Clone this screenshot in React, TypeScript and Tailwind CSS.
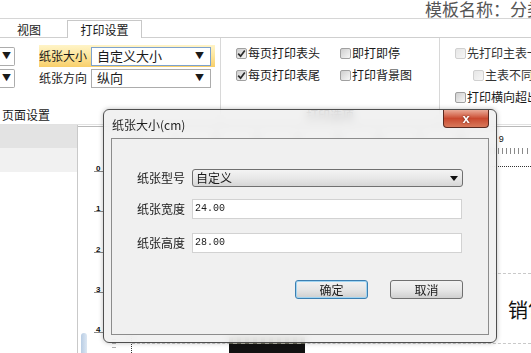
import { clsx } from 'clsx'

function Box({ checked, disabled }: { checked?: boolean; disabled?: boolean }) {
  return (
    <span
      className={clsx(
        'flex h-[11px] w-[11px] shrink-0 items-center justify-center rounded-[2px] border',
        disabled
          ? 'border-[#d0d0d0] bg-linear-to-br from-[#e6e6e6] to-[#f6f6f6]'
          : 'border-[#a0a0a0] bg-linear-to-br from-[#cfcfcf] to-[#f7f7f7]',
      )}
    >
      {checked && (
        <svg width="9" height="9" viewBox="0 0 9 9">
          <path d="M1.2 4.6 L3.6 7.2 L7.8 1.4" stroke="#2b2b2b" strokeWidth="1.7" fill="none" />
        </svg>
      )}
    </span>
  )
}

function Opt({ label, checked, disabled }: { label: string; checked?: boolean; disabled?: boolean }) {
  return (
    <div className="flex h-[22px] items-center gap-[1px] whitespace-nowrap">
      <Box checked={checked} disabled={disabled} />
      <span className={disabled ? 'text-[#333]' : 'text-[#1a1a1a]'}>{label}</span>
    </div>
  )
}

function RibbonSelect({ value, focused }: { value: string; focused?: boolean }) {
  return (
    <div
      className={clsx(
        'flex h-[19px] w-[120px] items-center justify-between border bg-white pl-[5px] pr-[6px] text-[13px]',
        focused ? 'border-[#7da2ce]' : 'border-[#acacac]',
      )}
    >
      <span>{value}</span>
      <span className="text-[9px]">▼</span>
    </div>
  )
}

const hTicks = [0, 1, 2, 3, 4, 5, 6, 7, 8, 9]
const vTicks = [0, 1, 2, 3, 4]

export default function App() {
  return (
    <div className="relative h-[353px] w-[531px] overflow-hidden bg-white font-['Noto_Sans_CJK_SC','Microsoft_YaHei',sans-serif] text-[12px] leading-[14px] text-[#1a1a1a]">
      {/* title strip */}
      <div className="h-[19px] overflow-hidden whitespace-nowrap border-b border-[#d6d6d6] pl-[425px] text-[17px] leading-[17px] text-[#555]">
        模板名称：分类销售单
      </div>

      {/* tabs */}
      <div className="flex h-[19px] items-end border-b border-[#cfcfcf]">
        <div className="w-[67px] self-center pl-[17px] pt-[3px]">视图</div>
        <div className="-mb-px flex h-[18px] w-[75px] items-center justify-center border border-b-0 border-[#c8c8c8] bg-white pt-[1px]">
          打印设置
        </div>
      </div>

      {/* ribbon */}
      <div className="flex h-[87px] border-b border-[#e2e2e2]">
        {/* page setup */}
        <div className="flex w-[221px] shrink-0 flex-col border-r border-[#d8d8d8] pt-[7px]">
          <div className="flex h-[22px] items-center">
            <div className="flex h-[19px] w-[15px] items-center rounded-r-[2px] border border-l-0 border-[#acacac] pl-[2px] text-[9px]">▼</div>
            <div className="ml-[24px] flex h-[22px] w-[176px] items-center bg-linear-to-b from-[#fff4c8] via-[#fde59a] to-[#f8cf6a]">
              <span className="w-[52px]">纸张大小</span>
              <RibbonSelect value="自定义大小" focused />
            </div>
          </div>
          <div className="flex h-[22px] items-center">
            <div className="flex h-[19px] w-[15px] items-center rounded-r-[2px] border border-l-0 border-[#acacac] pl-[2px] text-[9px]">▼</div>
            <span className="ml-[24px] w-[52px]">纸张方向</span>
            <RibbonSelect value="纵向" />
          </div>
          <div className="flex-1" />
          <div className="pb-[2px] pl-[2px]">页面设置</div>
        </div>

        {/* print options */}
        <div className="flex w-[219px] shrink-0 flex-col border-r border-[#d8d8d8] pt-[4px]">
          <div className="flex pl-[15px]">
            <div className="w-[104px]">
              <Opt label="每页打印表头" checked />
              <Opt label="每页打印表尾" checked />
            </div>
            <div>
              <Opt label="即打即停" />
              <Opt label="打印背景图" />
            </div>
          </div>
          <div className="flex-1" />
          <div className="pb-[2px] text-center">打印选项</div>
        </div>

        {/* master/detail */}
        <div className="flex min-w-0 flex-1 flex-col overflow-hidden pl-[15px] pt-[4px]">
          <Opt label="先打印主表一次" disabled />
          <div className="pl-[18px]">
            <Opt label="主表不同时分页" disabled />
          </div>
          <Opt label="打印横向超出部分" />
        </div>
      </div>

      {/* work area */}
      <div className="flex h-[228px]">
        <div className="flex w-[78px] shrink-0 flex-col border-r border-[#c9c9c9]">
          <div className="h-[23px] bg-[#e3e3e3]" />
          <div className="h-[24px] bg-[#f1f1f1]" />
        </div>

        <div className="flex min-w-0 flex-1 flex-col overflow-hidden">
          {/* horizontal ruler */}
          <div className="mt-[1px] flex h-[40px] shrink-0 border-t border-[#b9b9b9]">
            <div className="w-[53px] shrink-0" />
            {hTicks.map((n) => (
              <div key={n} className="flex w-[40.75px] shrink-0 flex-col">
                <span className="mt-[8px] pl-[1px] font-['Liberation_Sans',sans-serif] text-[9px] leading-[8px] text-[#111]">{n}</span>
                <div className="mt-[5px] h-[6px] bg-[repeating-linear-gradient(90deg,#8a8a8a_0,#8a8a8a_1px,transparent_1px,transparent_4.075px)]" />
              </div>
            ))}
          </div>

          <div className="flex min-h-0 flex-1">
            {/* vertical ruler */}
            <div className="flex w-[26px] shrink-0">
              <div className="ml-[3px] flex w-[6px] flex-col justify-end">
                <div className="h-[20px] rounded-t-[3px] bg-linear-to-r from-[#b9cde4] to-[#dce7f3]" />
              </div>
              <div className="ml-[7px] flex w-[9px] flex-col overflow-hidden">
                {vTicks.map((n) => (
                  <div key={n} className="h-[40.3px] shrink-0">
                    <div className="-mt-[1px] h-[7px] border-b border-[#8a8a8a] pl-[2px] font-['Liberation_Sans',sans-serif] text-[8px] font-bold leading-[7px] text-[#111]">
                      {n}
                    </div>
                  </div>
                ))}
              </div>
            </div>
            <div className="flex w-[27px] shrink-0 flex-col justify-end pb-[2px] pl-[8px]">
              <div className="mb-[3px] h-px w-[4px] bg-[#b0b0b0]" />
              <div className="mb-[3px] h-px w-[4px] bg-[#b0b0b0]" />
              <div className="mb-[3px] h-px w-[4px] bg-[#b0b0b0]" />
            </div>

            {/* report page */}
            <div className="relative flex min-w-0 flex-1 flex-col border-l border-t border-dotted border-l-[#333] border-t-[#333]">
              <div className="h-[107px] shrink-0 border-b border-dashed border-[#c9c9c9]" />
              <div className="h-[70px] shrink-0 whitespace-nowrap border-b border-dashed border-[#c9c9c9] pl-[376px] pt-[24px] text-[20px] leading-[24px] text-[#111]">
                销售单
              </div>
              <div className="absolute left-[97px] top-[170px] flex w-[76px] flex-col">
                <div className="h-[7px] bg-[repeating-linear-gradient(90deg,#6b6b5a_0,#6b6b5a_4px,#b5b5a8_4px,#b5b5a8_8px)]" />
                <div className="h-[9px] bg-[#111]" />
              </div>
            </div>
          </div>
        </div>
      </div>

      {/* dialog */}
      <div className="absolute left-[103px] top-[109px] flex h-[234px] w-[394px] flex-col rounded-[6px] border border-[#4e4e4e] bg-[rgba(238,238,238,0.8)] px-[7px] pb-[7px] shadow-[0_0_5px_rgba(0,0,0,0.25)] backdrop-blur-[4px]">
        <div className="flex h-[28px] shrink-0 items-start justify-between">
          <span className="pl-[1px] pt-[8px] text-[12px] leading-[14px] text-[#1e1e1e]">纸张大小(cm)</span>
          <div className="flex h-[18px] w-[46px] items-center justify-center rounded-b-[4px] border border-t-0 border-[#5a2a20] bg-linear-to-b from-[#e9a996] via-[#c9492f] to-[#d8785a] font-['Liberation_Sans',sans-serif] text-[13px] font-bold leading-[13px] text-white [text-shadow:0_0_2px_#5a1a10]">
            x
          </div>
        </div>
        <div className="flex flex-1 flex-col border border-[#8c8c8c] bg-[#f0f0f0] pl-[25px] pr-[25px] pt-[30px]">
          <div className="flex h-[18px] items-center">
            <span className="w-[55px] shrink-0">纸张型号</span>
            <div className="flex h-[18px] flex-1 items-center justify-between rounded-[3px] border border-[#707070] bg-linear-to-b from-[#f4f4f4] via-[#e8e8e8] to-[#d6d6d6] pl-[3px] pr-[4px]">
              <span>自定义</span>
              <svg width="8" height="5" viewBox="0 0 8 5">
                <path d="M0 0 H8 L4 5 Z" fill="#111" />
              </svg>
            </div>
          </div>
          <div className="mt-[12px] flex h-[20px] items-center">
            <span className="w-[55px] shrink-0">纸张宽度</span>
            <div className="mr-[1px] flex h-[20px] flex-1 items-center border border-[#d2d2d2] bg-white pl-[2px] font-['Liberation_Mono',monospace] text-[10px]">
              24.00
            </div>
          </div>
          <div className="mt-[14px] flex h-[20px] items-center">
            <span className="w-[55px] shrink-0">纸张高度</span>
            <div className="mr-[1px] flex h-[20px] flex-1 items-center border border-[#d2d2d2] bg-white pl-[2px] font-['Liberation_Mono',monospace] text-[10px]">
              28.00
            </div>
          </div>
          <div className="mt-[27px] flex justify-end gap-[22px]">
            <div className="flex h-[19px] w-[73px] items-center justify-center rounded-[3px] border border-[#3c7fb1] bg-linear-to-b from-[#f2f2f2] via-[#e6e6e6] to-[#cfcfcf] shadow-[inset_0_0_0_1px_#9fd4f2]">
              确定
            </div>
            <div className="flex h-[19px] w-[73px] items-center justify-center rounded-[3px] border border-[#707070] bg-linear-to-b from-[#f2f2f2] via-[#e8e8e8] to-[#d0d0d0]">
              取消
            </div>
          </div>
        </div>
      </div>
    </div>
  )
}
